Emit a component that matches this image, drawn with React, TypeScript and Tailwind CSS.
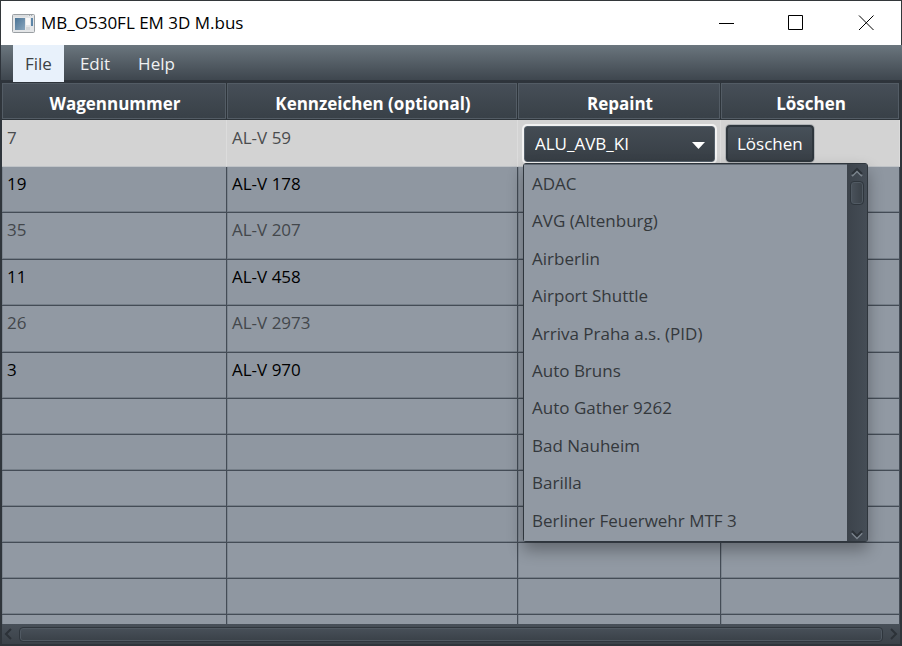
import { useState } from "react";

type Bus = {
    number: string;
    plate: string;
};

const menus = ["File", "Edit", "Help"];

const buses: Bus[] = [
    { number: "7", plate: "AL-V 59" },
    { number: "19", plate: "AL-V 178" },
    { number: "35", plate: "AL-V 207" },
    { number: "11", plate: "AL-V 458" },
    { number: "26", plate: "AL-V 2973" },
    { number: "3", plate: "AL-V 970" },
];

const repaints = [
    "ADAC",
    "AVG (Altenburg)",
    "Airberlin",
    "Airport Shuttle",
    "Arriva Praha a.s. (PID)",
    "Auto Bruns",
    "Auto Gather 9262",
    "Bad Nauheim",
    "Barilla",
    "Berliner Feuerwehr MTF 3",
];

// Filler rows keep the grid going down to the scroll bar
const emptyRows = [0, 1, 2, 3, 4, 5, 6];

const AppIcon = () => (
    <svg width="23" height="19" viewBox="0 0 23 19" aria-hidden="true">
        <defs>
            <linearGradient id="pane" x1="0" y1="0" x2="1" y2="1">
                <stop offset="0" stopColor="#4a7496" />
                <stop offset="1" stopColor="#8aa6bd" />
            </linearGradient>
        </defs>
        <rect x="0.5" y="0.5" width="22" height="18" rx="1" fill="#e4e6e8" stroke="#9a9fa3" />
        <path d="M1 2h15" stroke="#d3d6d8" />
        <path d="M17 1.5h4" stroke="#a9aeb2" strokeDasharray="1 1" />
        <rect x="3" y="4" width="10" height="12" fill="url(#pane)" />
        <rect x="14" y="4" width="4" height="7" fill="#f8f8f8" />
        <rect x="19" y="4" width="2" height="8" fill="#5d86a8" />
        <rect x="14" y="13" width="4" height="3" fill="#d3d6d8" />
    </svg>
);

const TitleBar = () => (
    <header className="flex h-11 shrink-0 items-center border-x border-[#33373a] bg-white pl-[11px]">
        <AppIcon />
        <h1 className="flex-1 pl-[6px] text-[17px] text-black">MB_O530FL EM 3D M.bus</h1>
        <button aria-label="Minimize" className="flex h-11 w-[70px] items-center justify-center">
            <svg width="16" height="16" viewBox="0 0 16 16" stroke="#000" fill="none">
                <path d="M1 8.5h15" />
            </svg>
        </button>
        <button aria-label="Maximize" className="flex h-11 w-[70px] items-center justify-center">
            <svg width="16" height="16" viewBox="0 0 16 16" stroke="#000" fill="none">
                <path d="M.5 .5h14v14h-14z" />
            </svg>
        </button>
        <button aria-label="Close" className="flex h-11 w-[70px] items-center justify-center">
            <svg width="16" height="16" viewBox="0 0 16 16" stroke="#000" fill="none">
                <path d="M1 .5l14.500 14.5M15.500 .5L1 15" />
            </svg>
        </button>
    </header>
);

const MenuBar = () => (
    <nav className="flex h-[38px] shrink-0 border-b border-l border-[#2e343b] bg-linear-to-b from-[#6b767e] from-0% via-[#3e464e] via-95% to-[#2e343b] to-96% pl-3 text-[17px]">
        {menus.map((menu) => (
            <button
                key={menu}
                className={`mr-1 px-3 pt-px ${menu === "File" ? "bg-[#e8f1fb] text-[#3c4044]" : "text-[#f0f1f2]"}`}
            >
                {menu}
            </button>
        ))}
    </nav>
);

const Chevron = ({ d }: { d: string }) => (
    <svg width="14" height="14" viewBox="0 0 14 14" fill="none" strokeWidth="2" aria-hidden="true">
        <path d={d} stroke="#2c3238" />
    </svg>
);

// Dark arrow with a light edge below, used inside the popup
const EmbossedChevron = ({ d }: { d: string }) => (
    <svg width="14" height="14" viewBox="0 0 14 14" fill="none" strokeWidth="2" aria-hidden="true">
        <path d={d} stroke="#7b848d" transform="translate(0 2)" />
        <path d={d} stroke="#2c3238" />
    </svg>
);

const RepaintPopup = () => (
    <div className="absolute top-full -left-px z-10 mt-px flex h-[379px] w-[345px] rounded-[3px] border border-[#2f363d] bg-[#444c54] shadow-[0_8px_16px_rgba(0,0,0,0.32)]">
        <ul className="flex flex-1 flex-col border-t border-[#636c76] bg-[#9199a3] pb-[2px]">
            {repaints.map((name) => (
                <li key={name} className="flex flex-1 items-center px-2 text-[17px] text-[#34383c]">
                    {name}
                </li>
            ))}
        </ul>
        <div className="flex w-5 flex-col items-center justify-between bg-linear-to-r from-[#3c434b] to-[#454d56] pt-px">
            <div className="flex flex-col items-center">
                <EmbossedChevron d="M2 9l5-5 5 5" />
                <div className="mt-[2px] h-6 w-[14px] rounded-[4px] border border-[#2f363d] bg-linear-to-r from-[#4a525b] to-[#3a4148] ring-1 ring-[#505962] ring-inset" />
            </div>
            <EmbossedChevron d="M2 4l5 5 5-5" />
        </div>
    </div>
);

const RepaintSelect = () => {
    const [repaint, setRepaint] = useState("ALU_AVB_KI");

    return (
        <div className="relative h-9 w-[191px]">
            <select
                aria-label="Repaint"
                value={repaint}
                onChange={(e) => setRepaint(e.target.value)}
                className="h-full w-full appearance-none rounded-[3px] border border-[#56616b] bg-linear-to-b from-[#444c54] to-[#373e45] px-[10px] text-[17px] text-white outline-2 outline-[#f2f2f2]"
            >
                <option>ALU_AVB_KI</option>
                {repaints.map((name) => (
                    <option key={name}>{name}</option>
                ))}
            </select>
            <svg className="pointer-events-none absolute top-4 right-[10px]" width="13" height="7" viewBox="0 0 13 7" fill="#fff" aria-hidden="true">
                <path d="M0 0h13L6.500 7z" />
            </svg>
            <RepaintPopup />
        </div>
    );
};

const headClass =
    "border-r border-b border-[#2d343a] bg-linear-to-b from-[#474f58] to-[#384047] pt-[6px] pr-0 pb-0 pl-[2px] text-[17px] font-bold text-white shadow-[inset_0_0_0_1px_#535c65]";
const cellClass = "border-r border-b border-[#444c56] px-[5px] pt-1 pb-0 align-top shadow-[inset_0_-1px_0_#757e88,inset_1px_0_0_#7d8690]";
const selectedClass = "border-r border-b border-r-[#dcdcdc] border-b-[#bfc3c7] pr-[5px] pb-0 align-top";

const BusTable = () => (
    <div className="min-h-0 flex-1 overflow-hidden border-x-2 border-[#2f353b] bg-[#9199a3]">
        <table className="w-full table-fixed border-separate border-spacing-0 text-[17px]">
            <colgroup>
                <col className="w-[225px]" />
                <col className="w-[291px]" />
                <col className="w-[203px]" />
                <col />
            </colgroup>
            <thead>
                <tr className="h-[37px]">
                    <th className={headClass}>Wagennummer</th>
                    <th className={headClass}>Kennzeichen (optional)</th>
                    <th className={headClass}>Repaint</th>
                    <th className={headClass}>Löschen</th>
                </tr>
            </thead>
            <tbody>
                {buses.map((bus, i) =>
                    i === 0 ? (
                        <tr key={bus.number} className="h-[47px] bg-[#d3d3d3] text-[#4a4c4e]">
                            <td className={`${selectedClass} pt-[5px] pl-[5px]`}>{bus.number}</td>
                            <td className={`${selectedClass} pt-[5px] pl-[5px]`}>{bus.plate}</td>
                            <td className={`${selectedClass} pt-[6px] pl-[6px]`}>
                                <RepaintSelect />
                            </td>
                            <td className={`${selectedClass} pt-[5px] pl-[5px]`}>
                                <button className="h-[37px] rounded-[4px] border-2 border-[#2f373e] bg-linear-to-b from-[#475059] to-[#394047] px-[9px] text-white ring-1 ring-[#8b9298]/50">
                                    Löschen
                                </button>
                            </td>
                        </tr>
                    ) : (
                        <tr
                            key={bus.number}
                            className={i % 2 ? "h-[46px] bg-[#8f97a1] text-black" : "h-[47px] bg-[#9199a3] text-[#43474b]"}
                        >
                            <td className={cellClass}>{bus.number}</td>
                            <td className={cellClass}>{bus.plate}</td>
                            <td className={cellClass} />
                            <td className={cellClass} />
                        </tr>
                    ),
                )}
                {emptyRows.map((row) => (
                    <tr key={row} className={row % 2 ? "h-9 bg-[#8f97a1]" : "h-9 bg-[#9199a3]"}>
                        <td className={cellClass} />
                        <td className={cellClass} />
                        <td className={cellClass} />
                        <td className={cellClass} />
                    </tr>
                ))}
            </tbody>
        </table>
    </div>
);

const HorizontalScrollBar = () => (
    <div className="flex h-[22px] shrink-0 items-center justify-between border-x-2 border-b-2 border-[#2f353b] bg-linear-to-b from-[#485059] to-[#3b4249]">
        <Chevron d="M9 2L4 7l5 5" />
        <div className="mx-[3px] h-[15px] flex-1 rounded-[4px] border border-[#2f363d] bg-linear-to-b from-[#485059] to-[#3a4148] ring-1 ring-[#505962] ring-inset" />
        <Chevron d="M5 2l5 5-5 5" />
    </div>
);

const App = () => (
    <div className="flex h-screen flex-col overflow-hidden border-t border-[#33373a] bg-[#3a4148] font-['Open_Sans','Noto_Sans',sans-serif]">
        <TitleBar />
        <MenuBar />
        <BusTable />
        <HorizontalScrollBar />
    </div>
);

export default App;
